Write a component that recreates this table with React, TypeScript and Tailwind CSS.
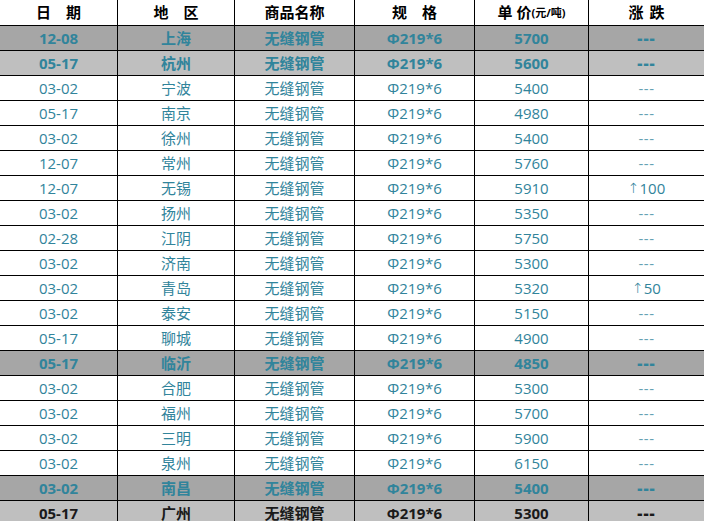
import React from 'react'

type Row = {
  date: string
  city: string
  price: string
  change: string
  style?: 'dark' | 'light' | 'black'
}

const rows: Row[] = [
  { date: '12-08', city: '上海', price: '5700', change: '---', style: 'dark' },
  { date: '05-17', city: '杭州', price: '5600', change: '---', style: 'light' },
  { date: '03-02', city: '宁波', price: '5400', change: '---' },
  { date: '05-17', city: '南京', price: '4980', change: '---' },
  { date: '03-02', city: '徐州', price: '5400', change: '---' },
  { date: '12-07', city: '常州', price: '5760', change: '---' },
  { date: '12-07', city: '无锡', price: '5910', change: '↑100' },
  { date: '03-02', city: '扬州', price: '5350', change: '---' },
  { date: '02-28', city: '江阴', price: '5750', change: '---' },
  { date: '03-02', city: '济南', price: '5300', change: '---' },
  { date: '03-02', city: '青岛', price: '5320', change: '↑50' },
  { date: '03-02', city: '泰安', price: '5150', change: '---' },
  { date: '05-17', city: '聊城', price: '4900', change: '---' },
  { date: '05-17', city: '临沂', price: '4850', change: '---', style: 'dark' },
  { date: '03-02', city: '合肥', price: '5300', change: '---' },
  { date: '03-02', city: '福州', price: '5700', change: '---' },
  { date: '03-02', city: '三明', price: '5900', change: '---' },
  { date: '03-02', city: '泉州', price: '6150', change: '---' },
  { date: '03-02', city: '南昌', price: '5400', change: '---', style: 'dark' },
  { date: '05-17', city: '广州', price: '5300', change: '---', style: 'black' }
]

const grid = 'grid grid-cols-[118px_117px_120px_120px_114px_115px]'
const cell = 'flex items-center justify-center border-r border-black'

const rowClass = (style?: Row['style']): string => {
  if (style === 'dark') return 'bg-[#a6a6a6] text-[#31849b] font-bold'
  if (style === 'light') return 'bg-[#bfbfbf] text-[#31849b] font-bold'
  if (style === 'black') return 'bg-[#bfbfbf] text-[#1a1a1a] font-bold'
  return 'bg-white text-[#31849b]'
}

const App: React.FC = () => {
  return (
    <div
      className="w-[704px] h-[524px] bg-white overflow-hidden text-[15px] leading-none"
      style={{ fontFamily: '"Open Sans", "Noto Sans CJK SC", sans-serif' }}
    >
      {/* Header */}
      <div className={`${grid} h-[26px] border-b border-black bg-white font-bold text-black`}>
        <div className={`${cell} whitespace-pre`}>日　期</div>
        <div className={`${cell} whitespace-pre`}>地　区</div>
        <div className={cell}>商品名称</div>
        <div className={`${cell} whitespace-pre`}>规　格</div>
        <div className={cell}>
          <span className="mr-1">单</span>
          <span>价</span>
          <span className="text-[11px] font-bold">(元/吨)</span>
        </div>
        <div className="flex items-center justify-center gap-[6px]">
          <span>涨</span>
          <span>跌</span>
        </div>
      </div>

      {/* Rows */}
      {rows.map((r, i) => {
        const last = i === rows.length - 1
        const pad = last ? 'pt-[4px]' : ''
        return (
          <div
            key={i}
            className={`${grid} ${last ? 'h-[20px]' : 'h-[25px] border-b border-black'} ${rowClass(r.style)}`}
          >
            <div className={`${cell} ${pad}`}>{r.date}</div>
            <div className={`${cell} ${pad}`}>{r.city}</div>
            <div className={`${cell} ${pad}`}>无缝钢管</div>
            <div className={`${cell} ${pad}`}>Φ219*6</div>
            <div className={`${cell} ${pad}`}>{r.price}</div>
            <div className={`flex items-center justify-center ${pad}`}>
              {r.change === '---' ? (
                r.style ? (
                  <span className="tracking-[1px] text-[16px] font-extrabold">---</span>
                ) : (
                  <span className="text-[15px] opacity-75 tracking-[0.5px]">---</span>
                )
              ) : (
                <span className="flex items-center">
                  <span className="font-['DejaVu_Sans'] text-[14px] font-light">↑</span>
                  {r.change.slice(1)}
                </span>
              )}
            </div>
          </div>
        )
      })}
    </div>
  )
}

export default App
